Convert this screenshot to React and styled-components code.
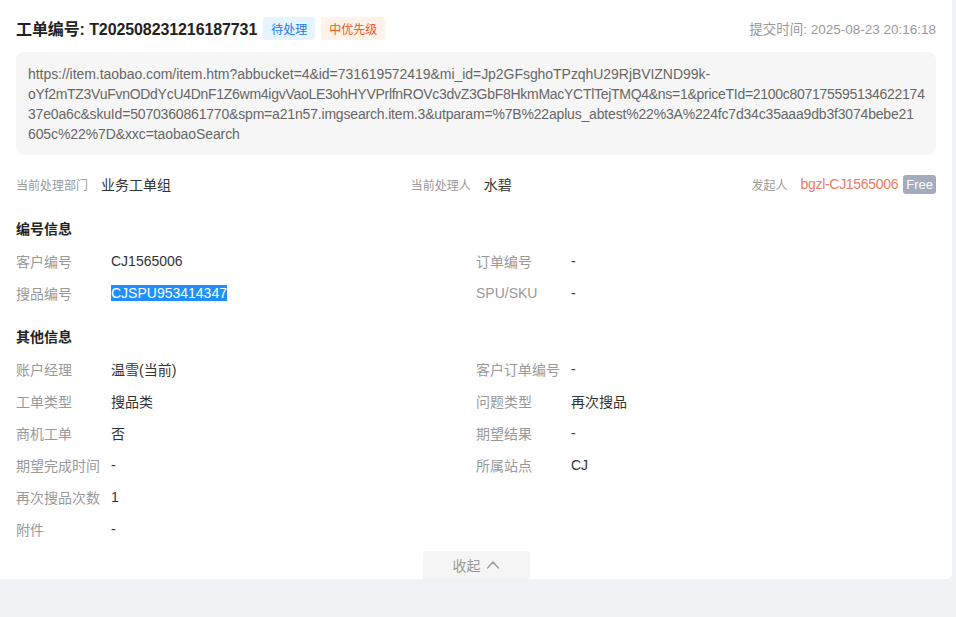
import styled, { createGlobalStyle } from "styled-components";

const GlobalStyle = createGlobalStyle`
  body {
    margin: 0;
    background: #f0f2f5;
    font-family: "Liberation Sans", "Noto Sans CJK SC", sans-serif;
    color: #333;
  }
`;

const urlLines = [
  { text: "https://item.taobao.com/item.htm?abbucket=4&id=731619572419&mi_id=Jp2GFsghoTPzqhU29RjBVIZND99k-", spacing: -0.05 },
  { text: "oYf2mTZ3VuFvnODdYcU4DnF1Z6wm4igvVaoLE3ohHYVPrlfnROVc3dvZ3GbF8HkmMacYCTlTejTMQ4&ns=1&priceTId=2100c807175595134622174", spacing: -0.28 },
  { text: "37e0a6c&skuId=5070360861770&spm=a21n57.imgsearch.item.3&utparam=%7B%22aplus_abtest%22%3A%224fc7d34c35aaa9db3f3074bebe21", spacing: -0.18 },
  { text: "605c%22%7D&xxc=taobaoSearch", spacing: -0.1 },
];

const idRows = [
  [
    { label: "客户编号", value: "CJ1565006" },
    { label: "订单编号", value: "-" },
  ],
  [
    { label: "搜品编号", value: "CJSPU953414347", selected: true },
    { label: "SPU/SKU", value: "-" },
  ],
];

const otherRows = [
  [
    { label: "账户经理", value: "温雪(当前)" },
    { label: "客户订单编号", value: "-" },
  ],
  [
    { label: "工单类型", value: "搜品类" },
    { label: "问题类型", value: "再次搜品" },
  ],
  [
    { label: "商机工单", value: "否" },
    { label: "期望结果", value: "-" },
  ],
  [
    { label: "期望完成时间", value: "-" },
    { label: "所属站点", value: "CJ" },
  ],
  [{ label: "再次搜品次数", value: "1" }, null],
  [{ label: "附件", value: "-" }, null],
];

const FieldGrid = ({ rows }) => (
  <Grid>
    {rows.flat().map((f, i) =>
      f ? (
        <Field key={i}>
          <FieldLabel>{f.label}</FieldLabel>
          <FieldValue>
            {f.selected ? <Selected>{f.value}</Selected> : f.value}
          </FieldValue>
        </Field>
      ) : (
        <Field key={i} />
      )
    )}
  </Grid>
);

const App = () => {
  return (
    <>
      <GlobalStyle />
      <Card>
        <Header>
          <TitleWrap>
            <Title>工单编号: T202508231216187731</Title>
            <Tag kind="blue">待处理</Tag>
            <Tag kind="orange">中优先级</Tag>
          </TitleWrap>
          <SubmitTime>提交时间: 2025-08-23 20:16:18</SubmitTime>
        </Header>

        <UrlBox>
          {urlLines.map((l) => (
            <UrlLine key={l.text} spacing={l.spacing}>{l.text}</UrlLine>
          ))}
        </UrlBox>

        <InfoBar>
          <InfoItem>
            <InfoLabel>当前处理部门</InfoLabel>
            <InfoValue>业务工单组</InfoValue>
          </InfoItem>
          <InfoItem>
            <InfoLabel>当前处理人</InfoLabel>
            <InfoValue>水碧</InfoValue>
          </InfoItem>
          <InfoItem>
            <InfoLabel>发起人</InfoLabel>
            <Initiator>bgzl-CJ1565006</Initiator>
            <FreeTag>Free</FreeTag>
          </InfoItem>
        </InfoBar>

        <SectionTitle>编号信息</SectionTitle>
        <FieldGrid rows={idRows} />

        <SectionTitle second>其他信息</SectionTitle>
        <FieldGrid rows={otherRows} />

        <CollapseRow>
          <CollapseButton>
            收起
            <svg width="14" height="10" viewBox="0 0 14 10" fill="none" stroke="#999" strokeWidth="1.3" strokeLinecap="round" strokeLinejoin="round">
              <polyline points="1.5 8 7 2 12.5 8" />
            </svg>
          </CollapseButton>
        </CollapseRow>
      </Card>
    </>
  );
};

const Card = styled.div`
  width: 952px;
  box-sizing: border-box;
  background: #fff;
  padding: 16px 16px 0 16px;
  border-radius: 0 0 6px 0;
`;

const Header = styled.div`
  display: flex;
  align-items: center;
  justify-content: space-between;
  height: 24px;
`;

const TitleWrap = styled.div`
  display: flex;
  align-items: center;
  gap: 6px;
`;

const Title = styled.div`
  font-size: 16px;
  font-weight: bold;
  color: #222;
  letter-spacing: -0.1px;
`;

const Tag = styled.span`
  display: inline-flex;
  align-items: center;
  height: 23px;
  padding: 0 8px;
  border-radius: 3px;
  font-size: 12px;
  background: ${(p) => (p.kind === "blue" ? "#e6f4ff" : "#fff2e8")};
  color: ${(p) => (p.kind === "blue" ? "#1677ff" : "#fa541c")};
`;

const SubmitTime = styled.div`
  font-size: 13.5px;
  color: #999;
`;

const UrlBox = styled.div`
  margin-top: 12px;
  background: #f6f6f6;
  border-radius: 8px;
  padding: 12px 8px 11px 12px;
  font-size: 14px;
  line-height: 20px;
  color: #666;
  overflow: hidden;
`;

const UrlLine = styled.div`
  white-space: nowrap;
  letter-spacing: ${(p) => p.spacing}px;
`;

const InfoBar = styled.div`
  display: flex;
  justify-content: space-between;
  align-items: center;
  margin-top: 18px;
  height: 22px;
`;

const InfoItem = styled.div`
  display: flex;
  align-items: center;
`;

const InfoLabel = styled.span`
  font-size: 12px;
  color: #999;
  margin-right: 13px;
`;

const InfoValue = styled.span`
  font-size: 14px;
  color: #333;
`;

const Initiator = styled.span`
  font-size: 14px;
  color: #f07a63;
  letter-spacing: -0.3px;
`;

const FreeTag = styled.span`
  display: inline-block;
  margin-left: 5px;
  background: #a3abbd;
  color: #fff;
  font-size: 13px;
  padding: 0 3px;
  border-radius: 3px;
  line-height: 19px;
`;

const SectionTitle = styled.div`
  margin-top: ${(p) => (p.second ? "17px" : "23px")};
  height: 22px;
  line-height: 22px;
  font-size: 14px;
  font-weight: bold;
  color: #222;
`;

const Grid = styled.div`
  margin-top: 5px;
  display: grid;
  grid-template-columns: 1fr 1fr;
`;

const Field = styled.div`
  display: flex;
  align-items: center;
  height: 32px;
`;

const FieldLabel = styled.span`
  width: 95px;
  flex-shrink: 0;
  font-size: 14px;
  color: #999;
  white-space: nowrap;
`;

const FieldValue = styled.span`
  font-size: 14px;
  color: #333;
`;

const Selected = styled.span`
  background: #1e8fff;
  color: #fff;
`;

const CollapseRow = styled.div`
  display: flex;
  justify-content: center;
  margin-top: 6px;
`;

const CollapseButton = styled.div`
  display: flex;
  align-items: center;
  justify-content: center;
  gap: 5px;
  width: 107px;
  height: 28px;
  background: #f5f5f5;
  border-radius: 4px 4px 0 0;
  font-size: 14px;
  color: #999;
`;

export default App;
